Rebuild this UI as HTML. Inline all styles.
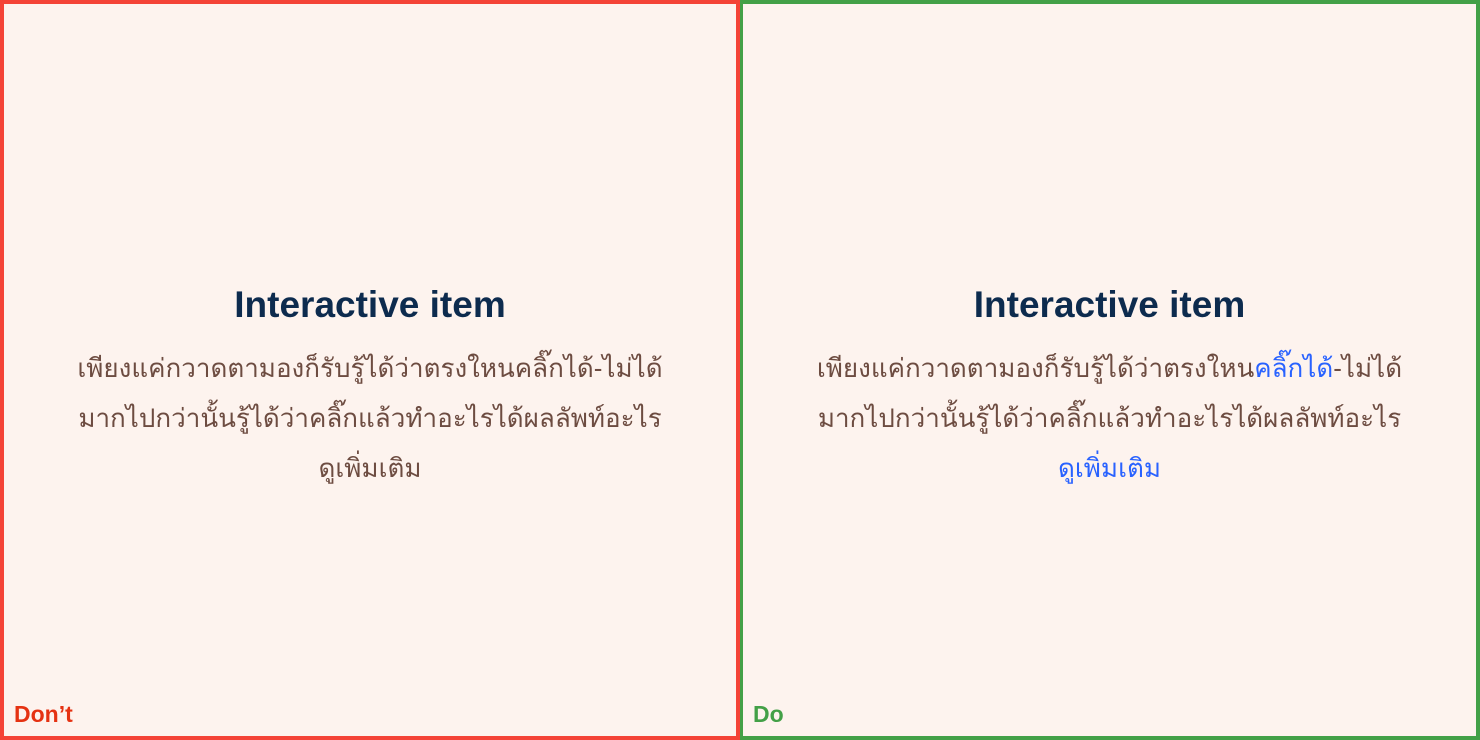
<!DOCTYPE html>
<html><head><meta charset="utf-8"><style>
html,body{margin:0;padding:0;width:1480px;height:740px;overflow:hidden;background:#fdf3ee;}
.p{position:absolute;top:0;width:740px;height:740px;box-sizing:border-box;border:4px solid;background:#fdf3ee;}
.l{left:0;border-color:#f44336;}
.r{left:740px;border-color:#43a047;border-left-width:3px;}
h1{position:absolute;left:0;right:0;top:278px;margin:0;text-align:center;font:bold 37px/46px "Liberation Sans",sans-serif;color:#0d2b4e;}
.t{position:absolute;left:0;right:0;top:339px;text-align:center;font:26px/50px "Liberation Sans",sans-serif;color:#6d4c41;}
.b{color:#2962ff;}
.lab{position:absolute;bottom:8px;left:10px;font:bold 23px "Liberation Sans",sans-serif;}
</style></head><body>
<div class="p l"><h1>Interactive item</h1>
<div class="t">เพียงแค่กวาดตามองก็รับรู้ได้ว่าตรงใหนคลิ๊กได้-ไม่ได้<br>มากไปกว่านั้นรู้ได้ว่าคลิ๊กแล้วทำอะไรได้ผลลัพท์อะไร<br>ดูเพิ่มเติม</div>
<div class="lab" style="color:#e53212">Don’t</div></div>
<div class="p r"><h1>Interactive item</h1>
<div class="t">เพียงแค่กวาดตามองก็รับรู้ได้ว่าตรงใหน<span class="b">คลิ๊กได้</span>-ไม่ได้<br>มากไปกว่านั้นรู้ได้ว่าคลิ๊กแล้วทำอะไรได้ผลลัพท์อะไร<br><span class="b">ดูเพิ่มเติม</span></div>
<div class="lab" style="color:#43a047">Do</div></div>
</body></html>
